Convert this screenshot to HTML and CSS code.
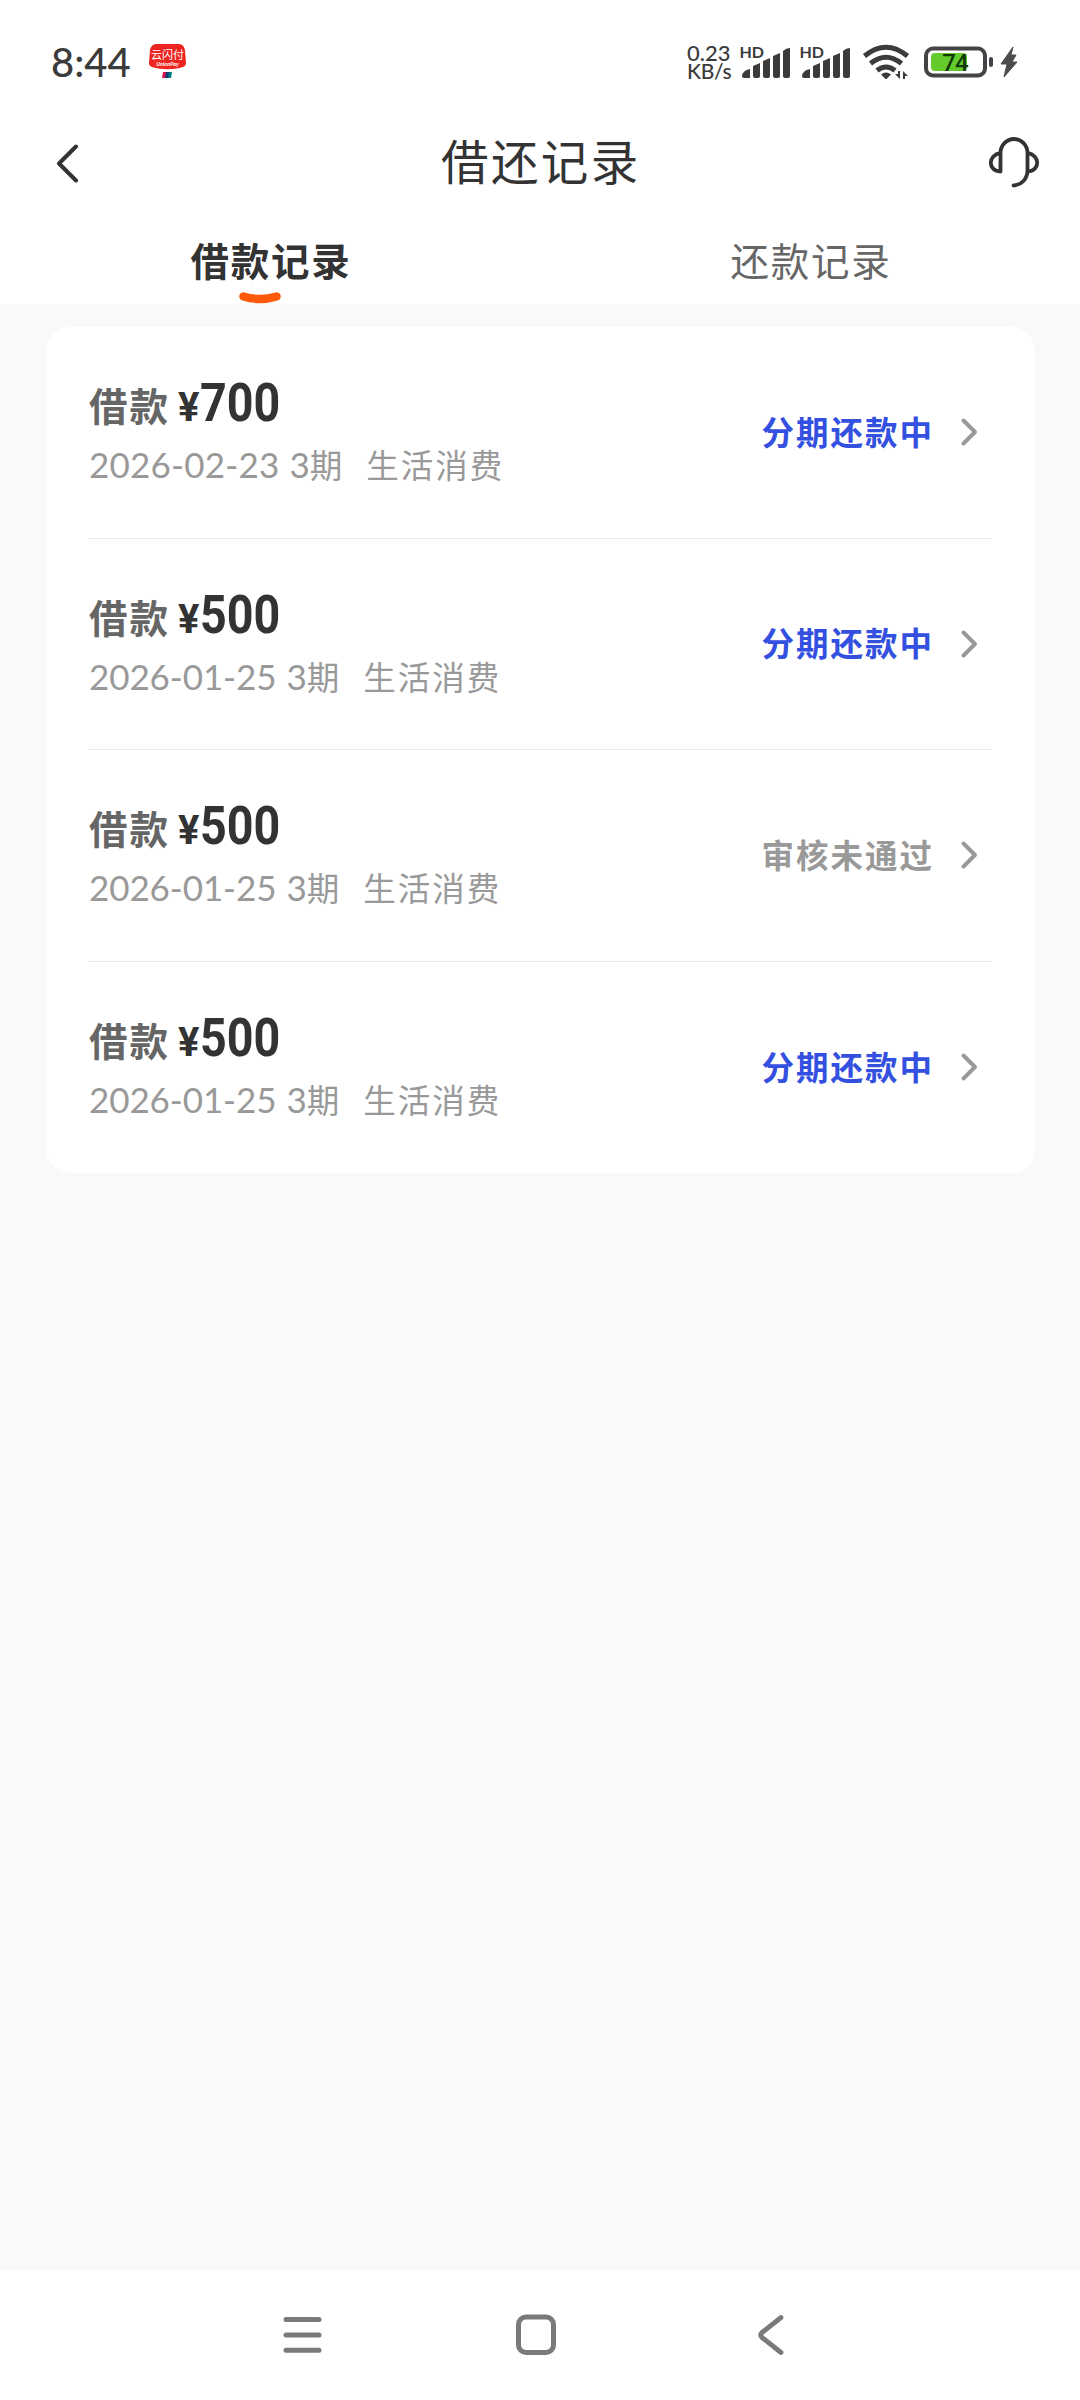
FILE: index.html
```html
<!DOCTYPE html>
<html lang="zh-CN">
<head>
<meta charset="utf-8">
<title>借还记录</title>
<link rel="stylesheet" href="styles.css">
</head>
<body>
<div class="screen">
  <div class="status-bar">
    <span class="clock">8:44</span>
    <svg class="pay-icon" width="40" height="40" viewBox="148 42 40 40">
      <path d="M157 44h21c4 0 6 2 7 6l1 13c0 2-1 3-3 4-10 3-21 3-31 0-2-1-3-2-3-4l1-13c1-4 3-6 7-6z" fill="#ee2420"/>
      <text x="167.500" y="58.500" class="pay-name">云闪付</text>
      <text x="167.500" y="66" class="pay-sub">UnionPay</text>
      <path d="M163 72h4l-1 6h-4z" fill="#e3124b"/><path d="M166 72h4l-1 6h-4z" fill="#133a6e"/><path d="M169 72h3l-1 6h-3z" fill="#007b84"/>
    </svg>
    <div class="speed"><span>0.23</span><span class="speed-unit">KB/s</span></div>
    <svg class="signal" width="60" height="40" viewBox="738 42 60 40">
      <text x="739.500" y="58" class="hd">HD</text>
      <g fill="#3b3b3b"><path d="M742 76c0-3 3-6 8-7v9h-6q-2 0-2-2z"/><path d="M753 66l7-3v13q0 2-2 2h-3q-2 0-2-2z"/><path d="M763 61l7-3v18q0 2-2 2h-3q-2 0-2-2z"/><path d="M773 56l7-3v23q0 2-2 2h-3q-2 0-2-2z"/><path d="M783 51q3-3 7-3v28q0 2-2 2h-3q-2 0-2-2z"/></g>
    </svg>
    <svg class="signal" width="60" height="40" viewBox="738 42 60 40">
      <text x="739.500" y="58" class="hd">HD</text>
      <g fill="#3b3b3b"><path d="M742 76c0-3 3-6 8-7v9h-6q-2 0-2-2z"/><path d="M753 66l7-3v13q0 2-2 2h-3q-2 0-2-2z"/><path d="M763 61l7-3v18q0 2-2 2h-3q-2 0-2-2z"/><path d="M773 56l7-3v23q0 2-2 2h-3q-2 0-2-2z"/><path d="M783 51q3-3 7-3v28q0 2-2 2h-3q-2 0-2-2z"/></g>
    </svg>
    <svg class="wifi" width="50" height="40" viewBox="861 42 50 40">
      <g fill="none" stroke="#3b3b3b" stroke-width="5"><path d="M864.500 56q21.500-17.500 43 0"/><path d="M870.500 63.500q15.500-12.500 31 0"/><path d="M877 70.500q9-7 18 0"/></g>
      <path d="M881 74.500q5-4 10 0l-4 4q-1 1-2 0z" fill="#3b3b3b"/>
      <path d="M900 71v8l-5-5h3v-3zM903 79v-8l5 5h-3v3z" fill="#3b3b3b"/>
    </svg>
    <svg class="battery" width="72" height="40" viewBox="923 42 72 40">
      <rect x="926" y="48.500" width="59" height="27" rx="7" fill="none" stroke="#454347" stroke-width="4"/>
      <rect x="931" y="53" width="36" height="18" rx="4" fill="#63cb2c"/>
      <rect x="989" y="57" width="4" height="10" rx="2" fill="#454347"/>
      <text x="955" y="70.500" class="level">74</text>
    </svg>
    <svg class="bolt" width="20" height="40" viewBox="999 42 20 40"><path d="M1013 47l-12 17h6l-3 13 13-15h-5l4-7h-5z" fill="#4c4c4c" stroke="#4c4c4c"/></svg>
  </div>

  <header class="title-bar">
    <svg width="24" height="40" viewBox="56 143 24 40"><path d="M76 146.500L59 163.500L76 180.500" fill="none" stroke="#333" stroke-width="4" stroke-linecap="round" stroke-linejoin="round"/></svg>
    <h1 class="title">借还记录</h1>
    <svg width="52" height="54" viewBox="988 136 52 54"><path d="M1000.500 171.500V153a13.500 14 0 0 1 27 0v17c0 9-6 15-14 15.500M1000.500 153c-13 2-13 18 0 18.500M1027.500 153c13 2 13 18 0 18.500" fill="none" stroke="#333" stroke-width="3.800" stroke-linecap="round" stroke-linejoin="round"/></svg>
  </header>

  <nav class="tabs">
    <div class="tab tab-active">借款记录
      <svg class="tab-mark" width="42" height="12" viewBox="0 0 42 12"><path d="M4.500 4.500Q21 9.500 37.500 4.500" fill="none" stroke="#ff5a0a" stroke-width="8.500" stroke-linecap="round"/></svg>
    </div>
    <div class="tab">还款记录</div>
  </nav>

  <main class="content">
    <section class="card">
      <article class="record">
        <div class="info">
          <div class="amount-line"><span class="label">借款</span><span class="yen">¥</span><span class="amount">700</span></div>
          <div class="detail"><span class="date">2026-02-23</span><span class="term"><span class="count">3</span>期</span><span>生活消费</span></div>
        </div>
        <span class="state">分期还款中</span>
        <svg class="arrow" width="20" height="30" viewBox="0 0 20 30"><path d="M3.500 3.500L15 15L3.500 26.500" fill="none" stroke="#999" stroke-width="4" stroke-linecap="round" stroke-linejoin="round"/></svg>
      </article>
      <article class="record">
        <div class="info">
          <div class="amount-line"><span class="label">借款</span><span class="yen">¥</span><span class="amount">500</span></div>
          <div class="detail"><span class="date date-tight">2026-01-25</span><span class="term"><span class="count">3</span>期</span><span>生活消费</span></div>
        </div>
        <span class="state">分期还款中</span>
        <svg class="arrow" width="20" height="30" viewBox="0 0 20 30"><path d="M3.500 3.500L15 15L3.500 26.500" fill="none" stroke="#999" stroke-width="4" stroke-linecap="round" stroke-linejoin="round"/></svg>
      </article>
      <article class="record">
        <div class="info">
          <div class="amount-line"><span class="label">借款</span><span class="yen">¥</span><span class="amount">500</span></div>
          <div class="detail"><span class="date date-tight">2026-01-25</span><span class="term"><span class="count">3</span>期</span><span>生活消费</span></div>
        </div>
        <span class="state state-rejected">审核未通过</span>
        <svg class="arrow" width="20" height="30" viewBox="0 0 20 30"><path d="M3.500 3.500L15 15L3.500 26.500" fill="none" stroke="#999" stroke-width="4" stroke-linecap="round" stroke-linejoin="round"/></svg>
      </article>
      <article class="record">
        <div class="info">
          <div class="amount-line"><span class="label">借款</span><span class="yen">¥</span><span class="amount">500</span></div>
          <div class="detail"><span class="date date-tight">2026-01-25</span><span class="term"><span class="count">3</span>期</span><span>生活消费</span></div>
        </div>
        <span class="state">分期还款中</span>
        <svg class="arrow" width="20" height="30" viewBox="0 0 20 30"><path d="M3.500 3.500L15 15L3.500 26.500" fill="none" stroke="#999" stroke-width="4" stroke-linecap="round" stroke-linejoin="round"/></svg>
      </article>
    </section>
  </main>

  <footer class="system-nav">
    <svg width="40" height="44" viewBox="282 2313 40 44"><path d="M286 2319.600H319M286 2335H319M286 2350.300H319" stroke="#7a7a7a" stroke-width="5" stroke-linecap="round"/></svg>
    <svg width="44" height="44" viewBox="514 2313 44 44"><rect x="518.500" y="2317" width="35" height="35.500" rx="7.500" fill="none" stroke="#7a7a7a" stroke-width="5"/></svg>
    <svg width="30" height="44" viewBox="756 2313 30 44"><path d="M781 2317.500L762 2332.500Q759.500 2335 762 2337.500L781 2352.500" fill="none" stroke="#7a7a7a" stroke-width="4.800" stroke-linecap="round" stroke-linejoin="round"/></svg>
  </footer>
</div>
</body>
</html>
```
FILE: styles.css
```css
* { box-sizing: border-box; }
body {
  margin: 0;
  background: #fff;
  color: #333;
  font-family: Lato, "Noto Sans CJK SC", sans-serif;
}
svg { display: block; flex: none; }
.screen {
  width: 1080px;
  height: 2400px;
  display: flex;
  flex-direction: column;
}
.status-bar {
  height: 124px;
  display: flex;
  align-items: center;
  padding-left: 51px;
}
.clock {
  width: 97px;
  font-size: 40px;
  font-weight: 500;
  color: #3b3b3b;
}
.pay-name { font: 400 11px "Noto Sans CJK SC", sans-serif; fill: #fff; text-anchor: middle; }
.pay-sub { font: italic 700 5.500px Lato, sans-serif; fill: #fff; text-anchor: middle; }
.speed {
  width: 50px;
  margin: 0 1px 0 499px;
  display: flex;
  flex-direction: column;
  font-size: 22px;
  line-height: 18.500px;
  font-weight: 500;
  color: #3b3b3b;
}
.speed-unit { font-size: 21px; letter-spacing: -.3px; }
.hd { font: 700 16px Lato, sans-serif; fill: #3b3b3b; }
.wifi { margin-left: 3px; }
.battery { margin-left: 12px; }
.level { font: 500 24px Roboto, sans-serif; fill: #123a08; text-anchor: middle; letter-spacing: -1px; }
.bolt { margin-left: 4px; }

.title-bar {
  height: 78px;
  display: flex;
  align-items: center;
  padding: 0 40px 0 56px;
}
.title {
  flex: 1;
  margin: 0 0 3px 361px;
  font-size: 47.500px;
  line-height: 75px;
  font-weight: 400;
  letter-spacing: 2.400px;
}
.tabs {
  height: 102px;
  display: flex;
}
.tab {
  position: relative;
  flex: 1;
  padding: 31px 0 0 2px;
  text-align: center;
  font-size: 38.500px;
  line-height: 56px;
  letter-spacing: 1.800px;
  color: #666;
}
.tab-active { color: #333; font-weight: 700; }
.tab-mark { position: absolute; left: 239px; bottom: 0; }

.content {
  flex: 1;
  padding: 23px 45px 0 46px;
  background: #f9f9f9;
}
.card {
  padding: 0 43px 0 42px;
  border-radius: 24px;
  background: #fff;
}
.record {
  height: 211.600px;
  display: flex;
  align-items: center;
  border-bottom: 1.500px solid #ebebeb;
}
.record:last-child { border-bottom-color: transparent; }
.info { flex: 1; padding: 3px 0 0 1px; }
.amount-line {
  display: flex;
  align-items: baseline;
  height: 61px;
  line-height: 60px;
}
.label {
  width: 89px;
  font-size: 38.500px;
  font-weight: 700;
  letter-spacing: 2px;
  color: #666;
}
.yen {
  width: 22px;
  font: 700 40px/60px Roboto, sans-serif;
}
.amount {
  font: 700 53px/60px Roboto, sans-serif;
  transform: scaleX(.88);
  transform-origin: left;
}
.detail {
  display: flex;
  align-items: baseline;
  height: 60px;
  font-size: 32.500px;
  line-height: 60px;
  letter-spacing: 2px;
  color: #999;
}
.date { font-size: 35px; letter-spacing: .2px; margin-right: 10px; }
.date-tight { letter-spacing: -.1px; }
.term { margin-right: 24px; letter-spacing: 0; }
.count { font-size: 35px; }
.state {
  padding-bottom: 4px;
  font-size: 32.500px;
  font-weight: 700;
  letter-spacing: 2px;
  color: #3450e0;
}
.state-rejected { color: #999; }
.arrow { margin: 0 12px 0 26px; }

.system-nav {
  height: 130px;
  display: flex;
  align-items: center;
  padding-left: 282px;
  gap: 192px;
}
.system-nav svg:last-child { margin-left: 6px; }
```
